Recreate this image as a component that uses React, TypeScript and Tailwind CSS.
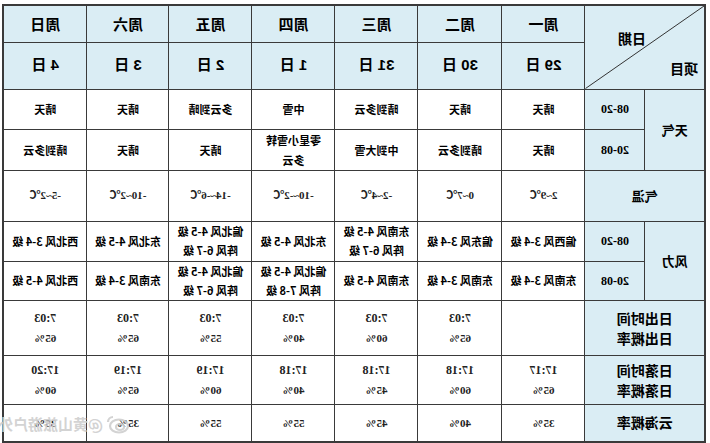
const days = [
  { w: "周一", d: "29 日" },
  { w: "周二", d: "30 日" },
  { w: "周三", d: "31 日" },
  { w: "周四", d: "1 日" },
  { w: "周五", d: "2 日" },
  { w: "周六", d: "3 日" },
  { w: "周日", d: "4 日" },
];

const weatherDay = ["晴天", "晴天", "晴到多云", "中雪", "多云到晴", "晴天", "晴天"];
const weatherNight = ["晴天", "晴到多云", "中到大雪", "零星小雪转多云", "晴天", "晴天", "晴到多云"];
const temps = ["2~9℃", "0~7℃", "-2~4℃", "-10~-2℃", "-14~-6℃", "-10~2℃", "-5~2℃"];
const windDay = [
  ["偏西风 3-4 级"],
  ["偏东风 3-4 级"],
  ["东南风 4-5 级", "阵风 6-7 级"],
  ["东北风 4-5 级"],
  ["偏北风 4-5 级", "阵风 6-7 级"],
  ["东北风 4-5 级"],
  ["西北风 3-4 级"],
];
const windNight = [
  ["东南风 3-4 级"],
  ["东南风 3-4 级"],
  ["东南风 4-5 级"],
  ["偏北风 4-5 级", "阵风 7-8 级"],
  ["偏北风 4-5 级", "阵风 6-7 级"],
  ["东南风 3-4 级"],
  ["西北风 4-5 级"],
];
const sunrise = [null, ["7:03", "65%"], ["7:03", "60%"], ["7:03", "40%"], ["7:03", "55%"], ["7:03", "65%"], ["7:03", "65%"]];
const sunset = [["17:17", "65%"], ["17:18", "60%"], ["17:18", "45%"], ["17:18", "40%"], ["17:19", "60%"], ["17:19", "65%"], ["17:20", "60%"]];
const clouds = ["35%", "40%", "45%", "55%", "55%", "35%", "35%"];

const cjk = "[font-family:'Noto_Sans_CJK_SC',sans-serif]";
const serif = "[font-family:'Liberation_Serif','Noto_Sans_CJK_SC',serif]";
const td = "border border-[#3a3a3a] text-center align-middle p-0";
const head = "bg-[#daedf4]";

const App = () => {
  return (
    <div className="w-[710px] h-[443px] bg-white overflow-hidden -scale-x-100 relative">
      <div className="pt-[4px] pl-[4px]">
        <table className="table-fixed border-collapse w-[702px] border-2 border-[#3a3a3a] text-black">
          <colgroup>
            <col className="w-[60px]" />
            <col className="w-[60px]" />
            <col className="w-[83px]" />
            <col className="w-[84px]" />
            <col className="w-[83px]" />
            <col className="w-[83px]" />
            <col className="w-[83px]" />
            <col className="w-[82px]" />
            <col className="w-[84px]" />
          </colgroup>
          <tbody>
            {/* Header */}
            <tr className="h-[37px]">
              <td colSpan={2} rowSpan={2} className={`${td} ${head} relative`}>
                <svg className="absolute inset-0 w-full h-full" viewBox="0 0 100 100" preserveAspectRatio="none">
                  <line x1="0" y1="0" x2="100" y2="100" stroke="#333" strokeWidth="1" vectorEffect="non-scaling-stroke" />
                </svg>
                <span className={`absolute left-[58px] top-[22px] text-[14px] font-bold ${cjk}`}>日期</span>
                <span className={`absolute left-[6px] top-[52px] text-[14px] font-bold ${cjk}`}>项目</span>
              </td>
              {days.map((d) => (
                <td key={d.w} className={`${td} ${head} text-[15px] font-bold ${cjk}`}>
                  {d.w}
                </td>
              ))}
            </tr>
            <tr className="h-[47px]">
              {days.map((d) => (
                <td key={d.d} className={`${td} ${head} text-[15px] font-bold [font-family:'Liberation_Sans','Noto_Sans_CJK_SC',sans-serif]`}>
                  {d.d}
                </td>
              ))}
            </tr>

            {/* Weather */}
            <tr className="h-[40px]">
              <td rowSpan={2} className={`${td} ${head} text-[13px] font-bold ${cjk}`}>天气</td>
              <td className={`${td} ${head} text-[12px] font-bold ${serif}`}>08-20</td>
              {weatherDay.map((t, i) => (
                <td key={i} className={`${td} text-[11px] font-bold ${cjk}`}>{t}</td>
              ))}
            </tr>
            <tr className="h-[39px]">
              <td className={`${td} ${head} text-[12px] font-bold ${serif}`}>20-08</td>
              {weatherNight.map((t, i) => (
                <td key={i} className={`${td} text-[11px] font-bold leading-[20px] px-[10px] ${cjk}`}>{t}</td>
              ))}
            </tr>

            {/* Temperature */}
            <tr className="h-[51px]">
              <td colSpan={2} className={`${td} ${head} text-[13px] font-bold ${cjk}`}>气温</td>
              {temps.map((t, i) => (
                <td key={i} className={`${td} text-[11px] font-bold text-[#222] ${serif}`}>{t}</td>
              ))}
            </tr>

            {/* Wind */}
            <tr className="h-[40px]">
              <td rowSpan={2} className={`${td} ${head} text-[13px] font-bold ${cjk}`}>风力</td>
              <td className={`${td} ${head} text-[12px] font-bold ${serif}`}>08-20</td>
              {windDay.map((lines, i) => (
                <td key={i} className={`${td} text-[11px] font-bold leading-[19px] ${cjk}`}>
                  {lines.map((l) => (
                    <div key={l}>{l}</div>
                  ))}
                </td>
              ))}
            </tr>
            <tr className="h-[39px]">
              <td className={`${td} ${head} text-[12px] font-bold ${serif}`}>20-08</td>
              {windNight.map((lines, i) => (
                <td key={i} className={`${td} text-[11px] font-bold leading-[19px] ${cjk}`}>
                  {lines.map((l) => (
                    <div key={l}>{l}</div>
                  ))}
                </td>
              ))}
            </tr>

            {/* Sunrise */}
            <tr className="h-[55px]">
              <td colSpan={2} className={`${td} ${head} text-[14px] font-bold leading-[20px] ${cjk}`}>
                <div>日出时间</div>
                <div>日出概率</div>
              </td>
              {sunrise.map((v, i) => (
                <td key={i} className={`${td} text-[12px] font-bold leading-[20px] text-[#222] ${serif}`}>
                  {v && (
                    <>
                      <div>{v[0]}</div>
                      <div className="text-[11px]">{v[1]}</div>
                    </>
                  )}
                </td>
              ))}
            </tr>

            {/* Sunset */}
            <tr className="h-[49px]">
              <td colSpan={2} className={`${td} ${head} text-[14px] font-bold leading-[20px] ${cjk}`}>
                <div>日落时间</div>
                <div>日落概率</div>
              </td>
              {sunset.map((v, i) => (
                <td key={i} className={`${td} text-[12px] font-bold leading-[20px] text-[#222] ${serif}`}>
                  <div>{v[0]}</div>
                  <div className="text-[11px]">{v[1]}</div>
                </td>
              ))}
            </tr>

            {/* Cloud sea */}
            <tr className="h-[38px]">
              <td colSpan={2} className={`${td} ${head} text-[14px] font-bold ${cjk}`}>云海概率</td>
              {clouds.map((c, i) => (
                <td key={i} className={`${td} text-[11px] font-bold text-[#222] ${serif}`}>{c}</td>
              ))}
            </tr>
          </tbody>
        </table>
      </div>

      {/* Watermark */}
      <div className="absolute left-[580px] top-[413px] flex items-center gap-[3px] text-[#cfcfcf] opacity-90">
        <svg width="24" height="20" viewBox="0 0 24 20" fill="none" stroke="#cfcfcf" strokeWidth="2.2">
          <ellipse cx="11" cy="12" rx="9" ry="6.5" />
          <ellipse cx="10" cy="13" rx="4" ry="3" />
          <path d="M17 3 a5 5 0 0 1 5 5" />
        </svg>
        <span className={`text-[15px] font-bold whitespace-nowrap ${cjk}`}>@黄山旅游户外</span>
      </div>
    </div>
  );
};

export default App;
